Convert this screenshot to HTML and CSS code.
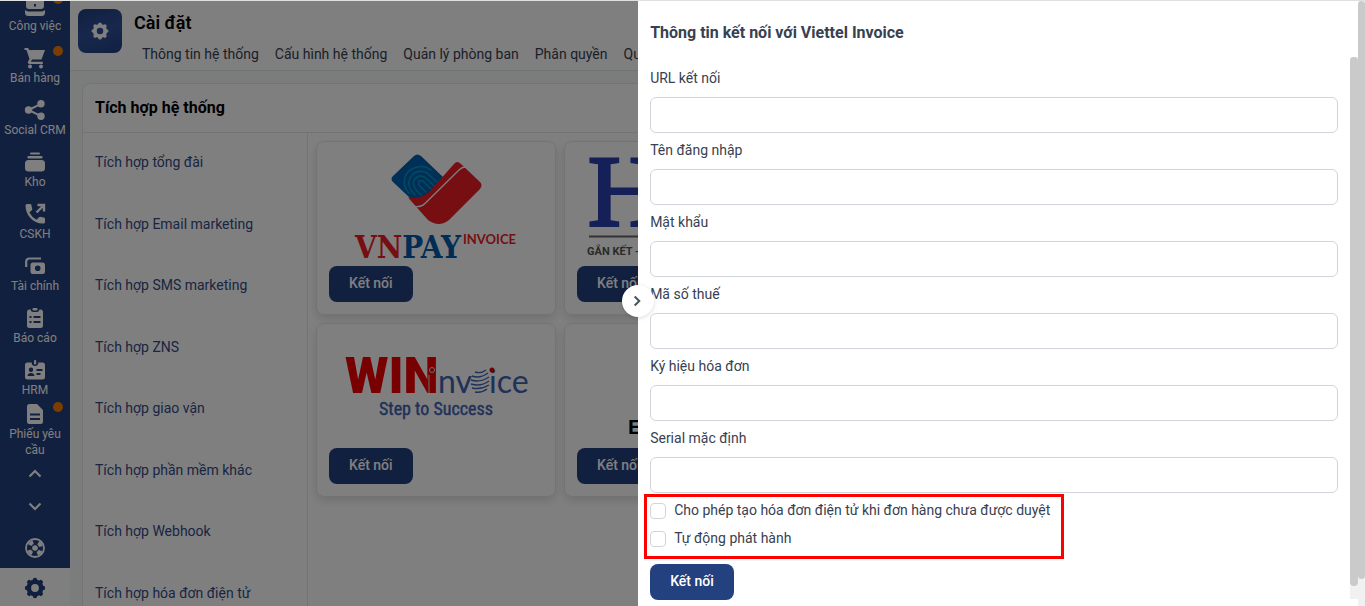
FILE: index.html
```html
<!DOCTYPE html>
<html lang="vi">
<head>
    <meta charset="UTF-8">
    <meta name="viewport" content="width=device-width, initial-scale=1.0">
    <title>Cài đặt - Tích hợp hệ thống</title>
    <link rel="stylesheet" href="styles.css">
</head>
<body>
    <svg class="sprite" aria-hidden="true">
        <symbol id="gear" viewBox="0 0 24 24">
            <circle cx="12" cy="12" r="6.200" fill="none" stroke="currentColor" stroke-width="4.600"/>
            <path d="M12 4v1M12 19v1M4 12h1M19 12h1M6.200 6.200l.8.8M17 17l.8.8M17.800 6.200l-.8.8M7 17l-.8.8" fill="none" stroke="currentColor" stroke-width="4.400" stroke-linecap="round"/>
        </symbol>
    </svg>

    <div class="app">
        <nav class="sidebar">
            <div class="menu">
                <a class="menuItem" href="#">
                    <span class="menuIcon"><svg viewBox="0 0 24 24"><path fill-rule="evenodd" d="M8 5V3.500A1.500 1.500 0 0 1 9.500 2h5A1.500 1.500 0 0 1 16 3.500V5h2a3 3 0 0 1 3 3v4q0 3-3 3H6q-3 0-3-3V8a3 3 0 0 1 3-3zm2 0h4V4h-4zM11 10v2.500h2V10z"/><path d="M2 16q2 1.500 4 1.500h12q2 0 4-1.500v2.500a3.500 3.500 0 0 1-3.500 3.500h-13A3.500 3.500 0 0 1 2 18.500z"/></svg><i class="dot"></i></span>
                    <span>Công việc</span>
                </a>
                <a class="menuItem" href="#">
                    <span class="menuIcon"><svg viewBox="0 0 24 24"><path d="M1.500 2h3.700l.9 2H22l-3.500 9.500H9l-1.200 2.300h12V18H6.300a1.500 1.500 0 0 1-1.300-2.200l1.500-2.800-3-9H1.500z"/><circle cx="7" cy="20.500" r="2"/><circle cx="18" cy="20.500" r="2"/></svg><i class="dot"></i></span>
                    <span>Bán hàng</span>
                </a>
                <a class="menuItem" href="#">
                    <span class="menuIcon"><svg viewBox="0 0 24 24"><circle cx="5.500" cy="12" r="3.700"/><circle cx="18" cy="5.800" r="3.700"/><circle cx="18" cy="18.200" r="3.700"/><path d="M18 5.800 5.500 12 18 18.200" fill="none" stroke="currentColor" stroke-width="2"/></svg></span>
                    <span>Social CRM</span>
                </a>
                <a class="menuItem" href="#">
                    <span class="menuIcon"><svg viewBox="0 0 24 24"><rect x="7" y="2.500" width="10" height="2" rx="1"/><rect x="4.500" y="6" width="15" height="2.500" rx="1.200"/><rect x="2" y="10" width="20" height="11.500" rx="3.500"/></svg></span>
                    <span>Kho</span>
                </a>
                <a class="menuItem" href="#">
                    <span class="menuIcon"><svg viewBox="0 0 24 24"><path d="M2.500 3.500Q2.500 2 4 2h3.200q1 0 1.200 1l.8 4q.1.800-.4 1.300L6.300 10.500q2.400 4.500 7.200 7.200l2.500-2.500q.5-.5 1.200-.4l3.700.8q1.100.2 1.100 1.200V20q0 1.600-1.500 1.600C10 22 2.500 13 2.500 3.500z"/><path d="M13.500 10.500 20.500 3.500M14.500 3h6.500v6.500" fill="none" stroke="currentColor" stroke-width="2.400"/></svg></span>
                    <span>CSKH</span>
                </a>
                <a class="menuItem" href="#">
                    <span class="menuIcon"><svg viewBox="0 0 24 24"><path d="M3.200 13V7.500a3 3 0 0 1 3-3H18" fill="none" stroke="currentColor" stroke-width="2.200"/><path fill-rule="evenodd" d="M10 8.500h9.500A2.500 2.500 0 0 1 22 11v6.500a2.500 2.500 0 0 1-2.500 2.500H10a2.500 2.500 0 0 1-2.500-2.500V11A2.500 2.500 0 0 1 10 8.500zm4.700 3a2.800 2.800 0 1 0 0 5.600 2.800 2.800 0 0 0 0-5.600z"/></svg></span>
                    <span>Tài chính</span>
                </a>
                <a class="menuItem" href="#">
                    <span class="menuIcon"><svg viewBox="0 0 24 24"><path fill-rule="evenodd" d="M6.500 3.500h1A3 3 0 0 0 10.500 6h3a3 3 0 0 0 3-2.500h1a2.500 2.500 0 0 1 2.500 2.500v13.500a2.500 2.500 0 0 1-2.500 2.500h-11A2.500 2.500 0 0 1 4 19.500V6a2.500 2.500 0 0 1 2.500-2.500zM6.500 10v2h2v-2zm4 0v2h7v-2zm-4 5v2h2v-2zm4 0v2h7v-2z"/><rect x="9.500" y="2" width="5" height="2.500" rx="1"/></svg></span>
                    <span>Báo cáo</span>
                </a>
                <a class="menuItem" href="#">
                    <span class="menuIcon"><svg viewBox="0 0 24 24"><path fill-rule="evenodd" d="M4.500 4.500h4.200A3.400 3.400 0 0 0 12 8a3.400 3.400 0 0 0 3.300-3.500h4.200A2.500 2.500 0 0 1 22 7v12a2.500 2.500 0 0 1-2.500 2.500h-15A2.500 2.500 0 0 1 2 19V7a2.500 2.500 0 0 1 2.500-2.500zM8 9.500a2.200 2.200 0 1 0 0 4.400 2.200 2.200 0 0 0 0-4.400zM4.500 18h7c0-4-7-4-7 0zm9-7v2h6v-2zm0 4v2h4v-2z"/><rect x="11" y="2" width="2.200" height="4.500" rx="1"/></svg></span>
                    <span>HRM</span>
                </a>
                <a class="menuItem" href="#">
                    <span class="menuIcon"><svg viewBox="0 0 24 24"><path fill-rule="evenodd" d="M6.500 2H14l6 6v11.500a2.500 2.500 0 0 1-2.500 2.500h-11A2.500 2.500 0 0 1 4 19.500v-15A2.500 2.500 0 0 1 6.500 2zm.5 9.500v2h10v-2zm0 4.500v2h10v-2z"/></svg><i class="dot"></i></span>
                    <span>Phiếu yêu cầu</span>
                </a>
            </div>
            <button class="menuArrow" type="button" aria-label="Lên"><svg viewBox="0 0 24 24"><path d="m6.500 14.500 5.500-5.500 5.500 5.500" fill="none" stroke="currentColor" stroke-width="2.200"/></svg></button>
            <button class="menuArrow" type="button" aria-label="Xuống"><svg viewBox="0 0 24 24"><path d="m6.500 9.500 5.500 5.500 5.500-5.500" fill="none" stroke="currentColor" stroke-width="2.200"/></svg></button>
            <a class="menuHelp" href="#" aria-label="Trợ giúp"><svg viewBox="0 0 24 24"><circle cx="12" cy="12" r="9" fill="none" stroke="currentColor" stroke-width="1.800"/><circle cx="12" cy="12" r="6.200" fill="none" stroke="currentColor" stroke-width="4" stroke-dasharray="4.400 5.340" stroke-dashoffset="-2.700"/><circle cx="12" cy="12" r="2.800"/></svg></a>
            <a class="menuSettings" href="#" aria-label="Cài đặt"><svg><use href="#gear"/></svg></a>
        </nav>

        <main class="main">
            <header class="topbar">
                <div class="topbarIcon"><svg><use href="#gear"/></svg></div>
                <div class="topbarText">
                    <h1>Cài đặt</h1>
                    <div class="tabs">
                        <a href="#">Thông tin hệ thống</a>
                        <a href="#">Cấu hình hệ thống</a>
                        <a href="#">Quản lý phòng ban</a>
                        <a href="#">Phân quyền</a>
                        <a href="#">Quản trị</a>
                    </div>
                </div>
            </header>

            <section class="panel">
                <h2>Tích hợp hệ thống</h2>
                <div class="panelBody">
                    <div class="sideList">
                        <a href="#">Tích hợp tổng đài</a>
                        <a href="#">Tích hợp Email marketing</a>
                        <a href="#">Tích hợp SMS marketing</a>
                        <a href="#">Tích hợp ZNS</a>
                        <a href="#">Tích hợp giao vận</a>
                        <a href="#">Tích hợp phần mềm khác</a>
                        <a href="#">Tích hợp Webhook</a>
                        <a href="#">Tích hợp hóa đơn điện tử</a>
                    </div>
                    <div class="cards">
                        <div class="card">
                            <svg class="logo" viewBox="0 0 214 112">
                                <path d="M85 2Q88-1 92 2L114 23 100 40Q90 47 81 44L64 28Q61 25 64 22z" fill="#0061b0"/>
                                <g fill="none" stroke="#0097c4" stroke-width="1.500" stroke-linecap="round">
                                    <path d="M80 39a15 15 0 0 1 5-25q9-4 17 2"/>
                                    <path d="M86 41q-9-9-5-17 6-10 17-5l10 9"/>
                                    <path d="M92 41q-10-9-7-15 5-7 12-2l8 8"/>
                                    <path d="M97 38l-7-7q-2-5 4-4l8 8"/>
                                </g>
                                <path d="M79 43.500Q92 46 101 37L125 10Q128 6 132 10L151 28Q154 31 151 35L120 66Q110 74 99 66z" fill="#ed1c24"/>
                                <path d="M86 52.500q6 1 10-3L130 16q3-3 6-3" fill="none" stroke="#fff" stroke-width="1.300"/>
                                <text x="26" y="104" class="vnpay"><tspan fill="#ed1c24">VN</tspan><tspan fill="#005baa">PAY</tspan></text>
                                <text x="134" y="90" class="vnpayInvoice">INVOICE</text>
                            </svg>
                            <button class="btn" type="button">Kết nối</button>
                        </div>
                        <div class="card">
                            <svg class="logo" viewBox="0 0 214 112">
                                <text x="11" y="72" class="bigH">H</text>
                                <path d="M12 82.500h190" stroke="#666" stroke-width="2"/>
                                <text x="10" y="101" class="slogan">GẮN KẾT -</text>
                            </svg>
                            <button class="btn" type="button">Kết nối</button>
                        </div>
                        <div class="card">
                            <svg class="logo" viewBox="0 0 214 112">
                                <text x="16" y="57" class="win">WIN</text>
                                <circle cx="103" cy="34" r="2.500" fill="#f00000" stroke="#ddd"/>
                                <path d="M100 39v18" stroke="#ddd"/>
                                <text x="109" y="57" class="winBlue">nv</text>
                                <g fill="none" stroke="#3f62b0" stroke-width="1.400">
                                    <path d="M146 36q6 2 11-2M143 40q8 3 16-3M142 44q9 3 18-3M142 48q10 3 18-3M143 52q9 2 17-3M146 56q7 1 12-3"/>
                                </g>
                                <text x="160" y="57" class="winBlue">ice</text>
                                <circle cx="163" cy="34" r="2.500" fill="#e60000"/>
                                <text x="50" y="79" class="winStep">Step to Success</text>
                            </svg>
                            <button class="btn" type="button">Kết nối</button>
                        </div>
                        <div class="card">
                            <svg class="logo" viewBox="0 0 214 112">
                                <text x="51" y="98" class="easy">E</text>
                            </svg>
                            <button class="btn" type="button">Kết nối</button>
                        </div>
                    </div>
                </div>
            </section>
        </main>
    </div>

    <div class="overlay"></div>

    <aside class="drawer">
        <button class="drawerToggle" type="button" aria-label="Đóng"><svg viewBox="0 0 24 24"><path d="m8 6.500 5.500 5.500L8 17.500" fill="none" stroke="currentColor" stroke-width="2.500"/></svg></button>
        <form class="drawerForm">
            <h3>Thông tin kết nối với Viettel Invoice</h3>
            <div class="fields">
                <label for="url">URL kết nối</label>
                <input type="text" id="url">
                <label for="username">Tên đăng nhập</label>
                <input type="text" id="username">
                <label for="password">Mật khẩu</label>
                <input type="password" id="password">
                <label for="taxcode">Mã số thuế</label>
                <input type="text" id="taxcode">
                <label for="symbol">Ký hiệu hóa đơn</label>
                <input type="text" id="symbol">
                <label for="serial">Serial mặc định</label>
                <input type="text" id="serial">
                <div class="checks">
                    <label><input type="checkbox"><span>Cho phép tạo hóa đơn điện tử khi đơn hàng chưa được duyệt</span></label>
                    <label><input type="checkbox"><span>Tự động phát hành</span></label>
                </div>
                <button class="btn" type="button">Kết nối</button>
            </div>
        </form>
        <div class="scroll scrollInner"><i></i></div>
        <div class="scroll"><i></i></div>
    </aside>
</body>
</html>
```

FILE: styles.css
```css
*{
    box-sizing: border-box;
}
body{
    margin: 0;
    height: 100vh;
    overflow: hidden;
    border-top: 1px solid #e0e0e0;
    font-family: Roboto, "Liberation Sans", sans-serif;
    font-size: 14px;
    line-height: 20px;
    color: #374151;
}
a{
    color: inherit;
    text-decoration: none;
}
h1, h2, h3{
    margin: 0;
}
button{
    border: 0;
    padding: 0;
    background: none;
    color: inherit;
    font: inherit;
}
svg{
    display: block;
    width: 24px;
    height: 24px;
    fill: currentColor;
}
.sprite{
    display: none;
}
.app{
    display: flex;
    height: 100%;
}

/* left menu */
.sidebar{
    display: flex;
    flex-direction: column;
    flex: none;
    width: 70px;
    background: #23407f;
    color: #fff;
    font-size: 12px;
    line-height: 16px;
    text-align: center;
}
.menu{
    display: flex;
    flex-direction: column;
    justify-content: flex-end;
    flex: 1;
    min-height: 0;
    overflow: hidden;
    padding-bottom: 2px;
}
.menuItem{
    display: flex;
    flex-direction: column;
    align-items: center;
    justify-content: center;
    flex: none;
    height: 52px;
}
.menuIcon{
    position: relative;
}
.dot{
    position: absolute;
    top: 0;
    left: 30px;
    width: 10px;
    height: 10px;
    border-radius: 50%;
    background: #f97a00;
}
.menuArrow{
    display: flex;
    align-items: center;
    justify-content: center;
    height: 32px;
}
.menuHelp{
    display: flex;
    justify-content: center;
    padding: 14px 0 8px;
}
.menuSettings{
    display: flex;
    justify-content: center;
    padding: 8px 0 6px;
    background: #fff;
    color: #23407f;
}

/* page */
.main{
    display: flex;
    flex-direction: column;
    flex: 1;
    min-width: 0;
    background: #f7fbf8;
}
.topbar{
    display: flex;
    gap: 12px;
    height: 70px;
    padding: 8px;
    background: #fff;
    border-bottom: 1px solid #e5e7eb;
}
.topbarIcon{
    display: flex;
    align-items: center;
    justify-content: center;
    width: 44px;
    height: 44px;
    border-radius: 8px;
    background: linear-gradient(160deg, #23407f, #2f509a 50%, #23407f);
    color: #fff;
}
.topbarIcon svg{
    width: 20px;
    height: 20px;
}
.topbarText h1{
    font-size: 18px;
    line-height: 28px;
    font-weight: 600;
    color: #000;
}
.tabs{
    display: flex;
    gap: 16px;
    padding: 7px 8px 0;
    white-space: nowrap;
}
.panel{
    display: flex;
    flex-direction: column;
    flex: 1;
    min-height: 0;
    margin: 12px 12px 0;
    border: 1px solid #e5e7eb;
    border-bottom: 0;
    border-radius: 8px 8px 0 0;
    background: #fff;
}
.panel h2{
    padding: 12px;
    border-bottom: 1px solid #e5e7eb;
    font-size: 16px;
    line-height: 24px;
    font-weight: 700;
    color: #000;
}
.panelBody{
    display: flex;
    flex: 1;
    min-height: 0;
}
.sideList{
    display: flex;
    flex-direction: column;
    justify-content: space-between;
    flex: none;
    width: 225px;
    padding: 19px 12px 3px;
    border-right: 1px solid #e5e7eb;
    color: #344b86;
}
.cards{
    display: grid;
    grid-template-columns: repeat(2, 240px);
    align-content: start;
    gap: 8px;
    flex: 1;
    padding: 8px;
}
.card{
    padding: 12px;
    border: 1px solid #e5e7eb;
    border-radius: 8px;
    box-shadow: 0 4px 8px rgba(0, 0, 0, 0.12);
}
.logo{
    width: 100%;
    height: 112px;
}
.vnpay{
    font: bold 31px "DejaVu Serif Condensed", "DejaVu Serif", serif;
}
.vnpayInvoice{
    font: bold 13px Lato, sans-serif;
    fill: #ed1c24;
}
.bigH{
    font: 102px "Liberation Serif", serif;
    fill: #2a40b0;
    stroke: #2a40b0;
    stroke-width: 3px;
}
.slogan{
    font: bold 11px Roboto, sans-serif;
    fill: #555;
}
.win{
    font: 900 50px Roboto, sans-serif;
    fill: #f00000;
}
.winBlue{
    font: 32px Lato, sans-serif;
    fill: #3f62b0;
}
.winStep{
    font: 18px "Liberation Sans Narrow", "Roboto Condensed", Roboto, sans-serif;
    fill: #3f62b0;
    stroke: #3f62b0;
    stroke-width: 0.4;
}
.easy{
    font: bold 21px "Liberation Sans", sans-serif;
    fill: #000;
}
.btn{
    display: block;
    height: 36px;
    padding: 0 20px 2px;
    border-radius: 8px;
    background: #23407f;
    color: #fff;
    font-weight: 500;
}

/* drawer */
.overlay{
    position: fixed;
    inset: 1px 0 0;
    background: rgba(0, 0, 0, 0.5);
}
.drawer{
    position: fixed;
    top: 1px;
    right: 0;
    bottom: 0;
    display: flex;
    width: 53.25vw;
    background: #fff;
}
.drawerToggle{
    position: absolute;
    top: calc(50% - 19px);
    left: -16px;
    display: flex;
    align-items: center;
    justify-content: center;
    width: 32px;
    height: 32px;
    border-radius: 50%;
    background: #fff;
    box-shadow: 0 1px 4px rgba(0, 0, 0, 0.15);
    color: #4b5563;
}
.drawerToggle svg{
    width: 20px;
    height: 20px;
}
.drawerForm{
    flex: 1;
    padding: 0 12px;
}
.drawerForm h3{
    padding: 20px 0 12px;
    font-size: 16px;
    line-height: 24px;
    font-weight: 700;
}
.fields{
    display: flex;
    flex-direction: column;
    align-items: flex-start;
    padding-top: 4px;
}
.fields > label{
    padding-bottom: 2px;
    line-height: 34px;
}
.fields > input{
    width: 100%;
    height: 36px;
    padding: 0 12px;
    border: 1px solid #d1d5db;
    border-radius: 6px;
    background: #fff;
    font: inherit;
}
.checks{
    margin: 1px 0 5px -6px;
    padding: 0 11px 3px 3px;
    border: 3px solid #f00;
}
.checks label{
    display: flex;
    align-items: center;
    gap: 8px;
    height: 28px;
}
.checks span{
    padding-bottom: 2px;
}
.checks input{
    appearance: none;
    width: 16px;
    height: 16px;
    margin: 0;
    border: 1px solid #d1d5db;
    border-radius: 4px;
}
.scroll{
    width: 7px;
    background: #f1f1f1;
}
.scroll i{
    display: block;
    height: calc(100% - 27px);
    border-radius: 4px;
    background: #cacaca;
}
.scrollInner{
    width: 8px;
    margin: 56px 0 7px;
}
.scrollInner i{
    height: calc(100% - 13px);
}
```
